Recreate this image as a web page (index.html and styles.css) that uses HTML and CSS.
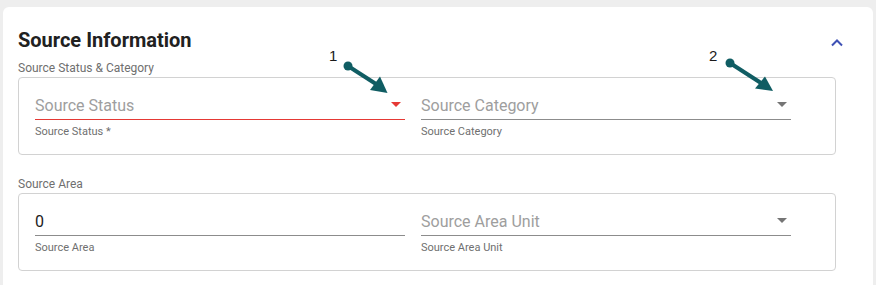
FILE: index.html
```html
<!DOCTYPE html>
<html lang="en">
<head>
    <meta charset="UTF-8">
    <meta name="viewport" content="width=device-width, initial-scale=1.0">
    <title>Source Information</title>
    <link rel="stylesheet" href="styles.css">
</head>
<body>
    <div class="card">
        <div class="card-header">
            <h2>Source Information</h2>
            <svg class="collapse-icon" width="12" height="8" viewBox="0 0 12 8">
                <polyline points="1,6.5 6,1.5 11,6.5" fill="none" stroke="#3f51b5" stroke-width="2"/>
            </svg>
        </div>

        <div class="section">
            <div class="section-label">Source Status &amp; Category</div>
            <div class="fieldset">
                <div class="field">
                    <div class="field-input invalid">
                        <span class="placeholder">Source Status</span>
                        <span class="select-arrow"></span>
                    </div>
                    <div class="hint">Source Status *</div>
                </div>
                <div class="field">
                    <div class="field-input">
                        <span class="placeholder">Source Category</span>
                        <span class="select-arrow"></span>
                    </div>
                    <div class="hint">Source Category</div>
                </div>
            </div>
        </div>

        <div class="section section-gap">
            <div class="section-label">Source Area</div>
            <div class="fieldset">
                <div class="field">
                    <div class="field-input">
                        <span class="value">0</span>
                    </div>
                    <div class="hint">Source Area</div>
                </div>
                <div class="field">
                    <div class="field-input">
                        <span class="placeholder">Source Area Unit</span>
                        <span class="select-arrow"></span>
                    </div>
                    <div class="hint">Source Area Unit</div>
                </div>
            </div>
        </div>
    </div>

    <!-- callout arrows drawn over the form -->
    <svg class="annotations" width="876" height="285" viewBox="0 0 876 285">
        <text x="329" y="61" class="callout-num">1</text>
        <circle cx="348" cy="66" r="4.5" fill="#105d63"/>
        <line x1="348" y1="66" x2="376" y2="84" stroke="#105d63" stroke-width="4"/>
        <polygon points="370,90 380,76.5 387.5,93" fill="#105d63"/>

        <text x="709" y="61" class="callout-num">2</text>
        <circle cx="730" cy="63" r="4.5" fill="#105d63"/>
        <line x1="730" y1="63" x2="761" y2="83" stroke="#105d63" stroke-width="4"/>
        <polygon points="755,88.5 765,76.5 773,91" fill="#105d63"/>
    </svg>
</body>
</html>
```

FILE: styles.css
```css
* {
    box-sizing: border-box;
}

html, body {
    margin: 0;
    height: 100%;
    overflow: hidden;
}

body {
    position: relative;
    background: #eeeeee;
    padding: 7px 3px 0;
    font-family: Roboto, "Liberation Sans", sans-serif;
    color: #212121;
}

.card {
    background: #fff;
    border-radius: 6px 6px 0 0;
    height: calc(100vh - 7px);
    padding: 21px 30px 0 15px;
}

.card-header {
    display: flex;
    justify-content: space-between;
    align-items: flex-start;
}

.card-header h2 {
    margin: 0;
    font-size: 20px;
    line-height: 24px;
    font-weight: 700;
    color: #212121;
}

.collapse-icon {
    margin-top: 10.5px;
}

.section {
    margin-top: 9px;
    margin-right: 7px;
}

.section-gap {
    margin-top: 22px;
}

.section-label {
    font-size: 12px;
    line-height: 14px;
    color: #6f6f6f;
    margin-bottom: 2px;
}

.fieldset {
    border: 1px solid #d2d2d2;
    border-radius: 4px;
    padding: 18px 16px 16px;
    display: grid;
    grid-template-columns: 370px 370px;
    column-gap: 16px;
}

.field-input {
    display: flex;
    justify-content: space-between;
    align-items: flex-start;
    height: 24px;
    padding-bottom: 3px;
    border-bottom: 1px solid #8c8c8c;
    font-size: 16px;
    line-height: 20px;
}

.field-input.invalid {
    border-bottom-color: #e53935;
}

.placeholder {
    color: #9e9e9e;
}

.value {
    color: #212121;
}

.select-arrow {
    width: 0;
    height: 0;
    margin-top: 6px;
    margin-right: 4px;
    border-left: 5px solid transparent;
    border-right: 5px solid transparent;
    border-top: 5px solid #757575;
}

.invalid .select-arrow {
    border-top-color: #e53935;
}

.hint {
    margin-top: 5px;
    font-size: 11px;
    line-height: 13px;
    color: #6f6f6f;
}

.annotations {
    position: absolute;
    top: 0;
    left: 0;
    pointer-events: none;
}

.callout-num {
    font-family: "Liberation Sans", Arial, sans-serif;
    font-size: 15px;
    fill: #1a1a1a;
}
```
